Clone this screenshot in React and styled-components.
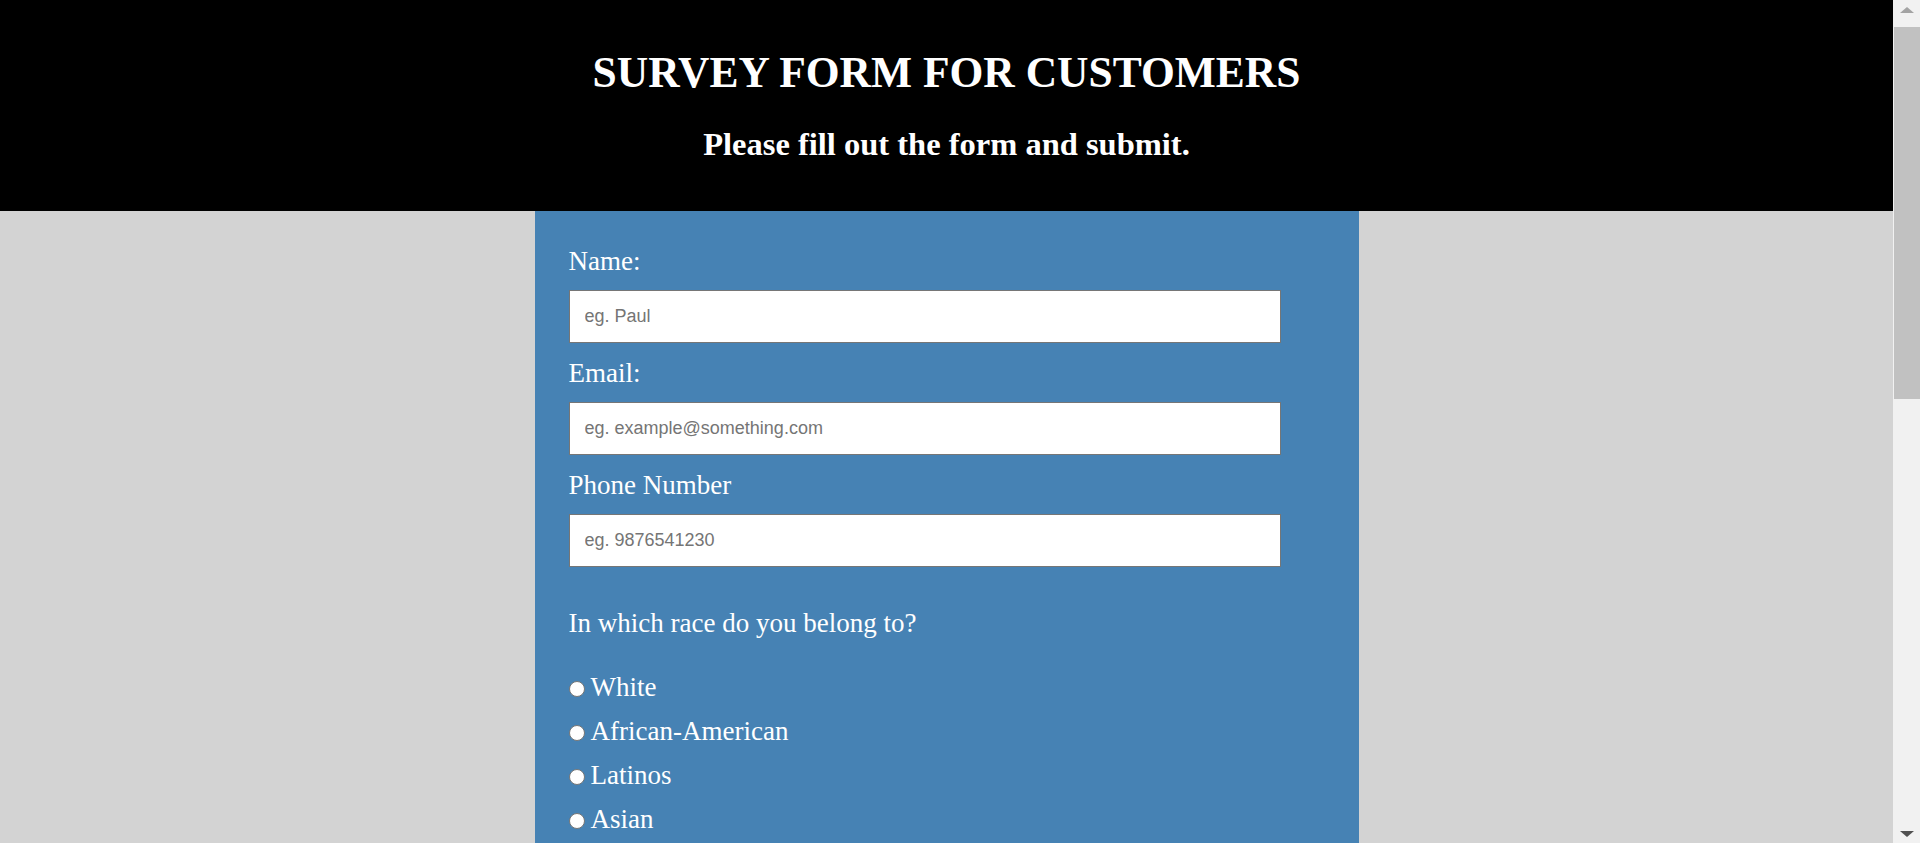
import React from 'react';
import styled, { createGlobalStyle } from 'styled-components';

const GlobalStyle = createGlobalStyle`
  html, body {
    margin: 0;
    padding: 0;
  }
  body {
    background: #d3d3d3;
    font-family: "Liberation Serif", "Times New Roman", serif;
    color: #fff;
    padding-right: 27px;
  }
`;

// stand-in for the classic browser scrollbar seen in the screenshot
const ScrollTrack = styled.div`
  position: fixed;
  top: 0;
  right: 0;
  width: 27px;
  height: 100vh;
  background: #f1f1f1;
`;

const ScrollThumb = styled.div`
  position: absolute;
  top: 27px;
  left: 1px;
  right: 0;
  height: 372px;
  background: #c1c1c1;
`;

const ScrollArrow = styled.div`
  position: absolute;
  left: 7px;
  width: 0;
  height: 0;
  border-left: 7px solid transparent;
  border-right: 7px solid transparent;
  ${(p) => p.$down
    ? `bottom: 6px; border-top: 6px solid #505050;`
    : `top: 7px; border-bottom: 6px solid #a3a3a3;`}
`;

const Header = styled.header`
  background: #000;
  padding: 48px 0;
  text-align: center;
`;

const Title = styled.h1`
  margin: 0 0 29px;
  font-size: 43.5px;
  line-height: 49px;
  font-weight: bold;
`;

const Subtitle = styled.h2`
  margin: 0;
  font-size: 32.5px;
  line-height: 37px;
  font-weight: bold;
`;

const Main = styled.main``;

const Panel = styled.form`
  width: 824px;
  min-height: 1620px;
  margin: 0 auto;
  box-sizing: border-box;
  padding: 35px 34px 60px;
  background: #4682b4;
`;

const Field = styled.div`
  display: flex;
  flex-direction: column;
  gap: 13px;
  margin-bottom: 15px;
`;

const Label = styled.label`
  font-size: 27px;
  line-height: 31px;
`;

const TextInput = styled.input`
  width: 712px;
  height: 53px;
  box-sizing: border-box;
  border: 1px solid #767676;
  padding: 0 15px;
  font-family: "Liberation Sans", Arial, sans-serif;
  font-size: 18px;
  color: #000;
  background: #fff;
  outline: none;

  &::placeholder {
    color: #757575;
  }
`;

const Question = styled.p`
  margin: 41px 0 26px;
  font-size: 27px;
  line-height: 31px;
`;

const OptionList = styled.div`
  display: flex;
  flex-direction: column;
`;

const Option = styled.label`
  font-size: 27px;
  line-height: 44px;
`;

const Tick = styled.input`
  appearance: none;
  box-sizing: border-box;
  width: 16px;
  height: 16px;
  margin: 0 6px 0 0;
  border: 1px solid #767676;
  border-radius: ${(p) => (p.type === 'checkbox' ? '2px' : '50%')};
  background: #fff;
  vertical-align: middle;
  position: relative;
  top: -1px;

  &:checked {
    background: radial-gradient(circle, #0075ff 0 4px, #fff 4.5px);
    border-color: #0075ff;
  }
`;

const TextArea = styled.textarea`
  display: block;
  width: 712px;
  height: 200px;
  box-sizing: border-box;
  border: 1px solid #767676;
  padding: 15px;
  font-family: "Liberation Sans", Arial, sans-serif;
  font-size: 18px;
  resize: vertical;
`;

const SubmitButton = styled.button`
  margin-top: 40px;
  width: 712px;
  height: 56px;
  border: none;
  background: #000;
  color: #fff;
  font-family: "Liberation Serif", "Times New Roman", serif;
  font-size: 27px;
  cursor: pointer;
`;

const races = ['White', 'African-American', 'Latinos', 'Asian', 'Others'];
const likes = ['Products', 'Customer Service', 'Delivery Speed', 'Prices'];

function App() {
  return (
    <>
      <GlobalStyle />
      <Header>
        <Title id="title">SURVEY FORM FOR CUSTOMERS</Title>
        <Subtitle id="description">Please fill out the form and submit.</Subtitle>
      </Header>
      <Main>
        <Panel id="survey-form" onSubmit={(e) => e.preventDefault()}>
          <Field>
            <Label htmlFor="name">Name:</Label>
            <TextInput id="name" type="text" placeholder="eg. Paul" />
          </Field>
          <Field>
            <Label htmlFor="email">Email:</Label>
            <TextInput id="email" type="email" placeholder="eg. example@something.com" />
          </Field>
          <Field>
            <Label htmlFor="number">Phone Number</Label>
            <TextInput id="number" type="text" placeholder="eg. 9876541230" />
          </Field>

          <Question>In which race do you belong to?</Question>
          <OptionList>
            {races.map((race) => (
              <Option key={race}>
                <Tick type="radio" name="race" value={race} />
                {race}
              </Option>
            ))}
          </OptionList>

          <Question>What do you like most about us?</Question>
          <OptionList>
            {likes.map((like) => (
              <Option key={like}>
                <Tick type="checkbox" value={like} />
                {like}
              </Option>
            ))}
          </OptionList>

          <Question>Any comments or suggestions?</Question>
          <TextArea placeholder="Enter your comments here..." />

          <SubmitButton type="submit" id="submit">Submit</SubmitButton>
        </Panel>
      </Main>
      <ScrollTrack>
        <ScrollArrow />
        <ScrollThumb />
        <ScrollArrow $down />
      </ScrollTrack>
    </>
  );
}

export default App;
